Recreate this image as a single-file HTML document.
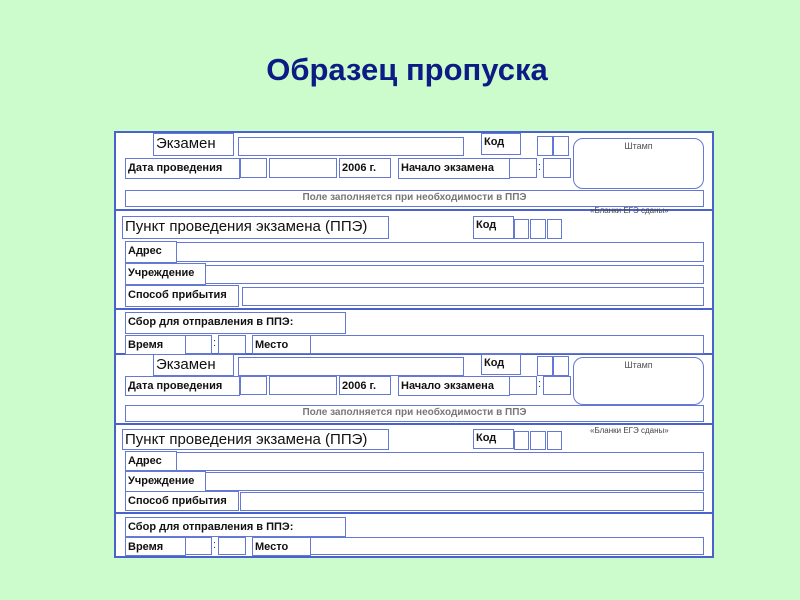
<!DOCTYPE html>
<html><head><meta charset="utf-8"><style>
body{margin:0;width:800px;height:600px;background:#ccfccc;position:relative;overflow:hidden;font-family:"Liberation Sans",sans-serif}
.t{position:absolute;left:0;width:814px;top:52px;text-align:center;font:bold 31px "Liberation Sans",sans-serif;color:#0c1c84}
.o{position:absolute;left:114px;top:131px;width:600px;height:427px;background:#fff;border:2px solid #4a62cc;box-sizing:border-box}
.h{position:absolute;left:114px;width:600px;height:0;border-top:2px solid #4a62cc}
.b{position:absolute;box-sizing:border-box;border:1.5px solid #6478d4;background:#fff;font:bold 11px "Liberation Sans",sans-serif;color:#111;padding-left:2px;line-height:18px;white-space:nowrap}
.big{font:normal 15px "Liberation Sans",sans-serif;line-height:20px}
.g{color:#777;text-align:center;font-size:10px;line-height:14px;padding:0}
.s{position:absolute;font:9px "Liberation Sans",sans-serif;color:#444}
.st{border-radius:10px;font:normal 9px "Liberation Sans",sans-serif;color:#555;text-align:center;padding:0;line-height:14px}
</style></head><body>
<div class="t">Образец пропуска</div>
<div class="o"></div>
<div class="h" style="top:209px"></div>
<div class="h" style="top:308px"></div>
<div class="h" style="top:353px"></div>
<div class="h" style="top:423px"></div>
<div class="h" style="top:512px"></div>

<!-- copy 1 -->
<div class="b big" style="left:153px;top:133px;width:81px;height:23px">Экзамен</div>
<div class="b" style="left:238px;top:137px;width:226px;height:19px"></div>
<div class="b" style="left:481px;top:133px;width:40px;height:22px;line-height:16px">Код</div>
<div class="b" style="left:537px;top:136px;width:16px;height:20px"></div>
<div class="b" style="left:553px;top:136px;width:16px;height:20px"></div>
<div class="b st" style="left:573px;top:138px;width:131px;height:51px">Штамп</div>
<div class="b" style="left:125px;top:158px;width:115px;height:21px">Дата проведения</div>
<div class="b" style="left:240px;top:158px;width:27px;height:20px"></div>
<div class="b" style="left:269px;top:158px;width:68px;height:20px"></div>
<div class="b" style="left:339px;top:158px;width:52px;height:20px">2006 г.</div>
<div class="b" style="left:398px;top:158px;width:112px;height:21px">Начало экзамена</div>
<div class="b" style="left:509px;top:158px;width:28px;height:20px"></div>
<div class="s" style="left:538px;top:161px;font-size:11px">:</div>
<div class="b" style="left:543px;top:158px;width:28px;height:20px"></div>
<div class="b g" style="left:125px;top:190px;width:579px;height:17px">Поле заполняется при необходимости в ППЭ</div>
<div class="s" style="left:590px;top:206px;font-size:8px">«Бланки ЕГЭ сданы»</div>
<div class="b big" style="left:122px;top:216px;width:267px;height:23px">Пункт проведения экзамена (ППЭ)</div>
<div class="b" style="left:473px;top:216px;width:41px;height:23px;line-height:16px">Код</div>
<div class="b" style="left:514px;top:219px;width:15px;height:20px"></div>
<div class="b" style="left:530px;top:219px;width:16px;height:20px"></div>
<div class="b" style="left:547px;top:219px;width:15px;height:20px"></div>
<div class="b" style="left:125px;top:241px;width:52px;height:22px">Адрес</div>
<div class="b" style="left:176px;top:242px;width:528px;height:20px"></div>
<div class="b" style="left:125px;top:263px;width:81px;height:22px">Учреждение</div>
<div class="b" style="left:205px;top:265px;width:499px;height:19px"></div>
<div class="b" style="left:125px;top:285px;width:114px;height:22px">Способ прибытия</div>
<div class="b" style="left:242px;top:287px;width:462px;height:19px"></div>
<div class="b" style="left:125px;top:312px;width:221px;height:22px">Сбор для отправления в ППЭ:</div>
<div class="b" style="left:125px;top:335px;width:61px;height:20px">Время</div>
<div class="b" style="left:185px;top:335px;width:27px;height:19px"></div>
<div class="s" style="left:213px;top:337px;font-size:11px">:</div>
<div class="b" style="left:218px;top:335px;width:28px;height:19px"></div>
<div class="b" style="left:252px;top:335px;width:59px;height:19px">Место</div>
<div class="b" style="left:310px;top:335px;width:394px;height:19px"></div>

<!-- copy 2 -->
<div class="b big" style="left:153px;top:354px;width:81px;height:22px">Экзамен</div>
<div class="b" style="left:238px;top:357px;width:226px;height:19px"></div>
<div class="b" style="left:481px;top:354px;width:40px;height:21px;line-height:16px">Код</div>
<div class="b" style="left:537px;top:356px;width:16px;height:20px"></div>
<div class="b" style="left:553px;top:356px;width:16px;height:20px"></div>
<div class="b st" style="left:573px;top:357px;width:131px;height:48px">Штамп</div>
<div class="b" style="left:125px;top:376px;width:115px;height:20px">Дата проведения</div>
<div class="b" style="left:240px;top:376px;width:27px;height:19px"></div>
<div class="b" style="left:269px;top:376px;width:68px;height:19px"></div>
<div class="b" style="left:339px;top:376px;width:52px;height:19px">2006 г.</div>
<div class="b" style="left:398px;top:376px;width:112px;height:20px">Начало экзамена</div>
<div class="b" style="left:509px;top:376px;width:28px;height:19px"></div>
<div class="s" style="left:538px;top:378px;font-size:11px">:</div>
<div class="b" style="left:543px;top:376px;width:28px;height:19px"></div>
<div class="b g" style="left:125px;top:405px;width:579px;height:17px">Поле заполняется при необходимости в ППЭ</div>
<div class="s" style="left:590px;top:426px;font-size:8px">«Бланки ЕГЭ сданы»</div>
<div class="b big" style="left:122px;top:429px;width:267px;height:21px;line-height:19px">Пункт проведения экзамена (ППЭ)</div>
<div class="b" style="left:473px;top:429px;width:41px;height:20px;line-height:16px">Код</div>
<div class="b" style="left:514px;top:431px;width:15px;height:19px"></div>
<div class="b" style="left:530px;top:431px;width:16px;height:19px"></div>
<div class="b" style="left:547px;top:431px;width:15px;height:19px"></div>
<div class="b" style="left:125px;top:451px;width:52px;height:20px">Адрес</div>
<div class="b" style="left:176px;top:452px;width:528px;height:19px"></div>
<div class="b" style="left:125px;top:471px;width:81px;height:21px">Учреждение</div>
<div class="b" style="left:205px;top:472px;width:499px;height:19px"></div>
<div class="b" style="left:125px;top:491px;width:114px;height:20px">Способ прибытия</div>
<div class="b" style="left:240px;top:492px;width:464px;height:19px"></div>
<div class="b" style="left:125px;top:517px;width:221px;height:20px">Сбор для отправления в ППЭ:</div>
<div class="b" style="left:125px;top:537px;width:61px;height:19px">Время</div>
<div class="b" style="left:185px;top:537px;width:27px;height:18px"></div>
<div class="s" style="left:213px;top:539px;font-size:11px">:</div>
<div class="b" style="left:218px;top:537px;width:28px;height:18px"></div>
<div class="b" style="left:252px;top:537px;width:59px;height:19px">Место</div>
<div class="b" style="left:310px;top:537px;width:394px;height:18px"></div>
</body></html>
